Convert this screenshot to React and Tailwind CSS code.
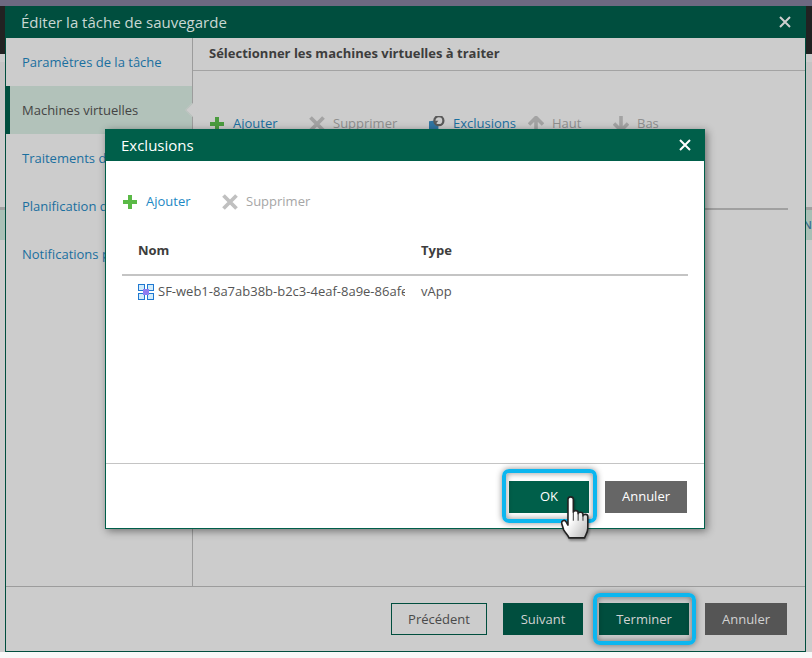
import React from "react";

function Plus({ className }) {
  return (
    <svg width="14" height="14" viewBox="0 0 14 14" className={className}>
      <path d="M5 0h4v5h5v4H9v5H5V9H0V5h5z" fill="currentColor" />
    </svg>
  );
}
function Cross({ className }) {
  return (
    <svg width="16" height="16" viewBox="0 0 16 16" className={className}>
      <path d="M1.500 1.500L14.500 14.500M14.500 1.500L1.500 14.500" stroke="currentColor" strokeWidth="3.800" fill="none" />
    </svg>
  );
}
function Close({ className }) {
  return (
    <svg width="12" height="12" viewBox="0 0 12 12" className={className}>
      <path d="M1 1L11 11M11 1L1 11" stroke="currentColor" strokeWidth="2" fill="none" />
    </svg>
  );
}
function ArrowUp() {
  return (
    <svg width="16" height="16" viewBox="0 0 16 16" className="text-[#a3a3a3]">
      <path d="M8 16V2M1 8.500L8 1.500L15 8.500" stroke="currentColor" strokeWidth="3.600" fill="none" />
    </svg>
  );
}
function ArrowDown() {
  return (
    <svg width="16" height="16" viewBox="0 0 16 16" className="text-[#a3a3a3]">
      <path d="M8 0V14M1 7.500L8 14.500L15 7.500" stroke="currentColor" strokeWidth="3.600" fill="none" />
    </svg>
  );
}
function ExclIcon() {
  return (
    <svg width="17" height="16" viewBox="0 0 17 16">
      <path d="M0 5L5 4.500L10 10V16H0z" fill="#2f74a1" />
      <circle cx="10.500" cy="4.500" r="4.800" fill="#cccccc" stroke="#5a5a5a" strokeWidth="2.400" />
      <path d="M6.500 8.500L10 4.500H6.500z" fill="#5a5a5a" />
    </svg>
  );
}
function VappIcon() {
  return (
    <svg width="16" height="16" viewBox="0 0 16 16" className="shrink-0">
      <g fill="#d3ecfb" stroke="#1f78d1" strokeWidth="1">
        <rect x="0.500" y="0.500" width="6" height="6" />
        <rect x="9.500" y="0.500" width="6" height="6" />
        <rect x="0.500" y="9.500" width="6" height="6" />
        <rect x="9.500" y="9.500" width="6" height="6" />
      </g>
      <rect x="5" y="5" width="6" height="6" fill="#8f7cf0" />
    </svg>
  );
}
function Hand() {
  return (
    <svg width="30" height="44" viewBox="0 0 28 41">
      <defs>
        <linearGradient id="hg" x1="0" y1="0" x2="1" y2="1">
          <stop offset="0.45" stopColor="#ffffff" />
          <stop offset="1" stopColor="#b5b5b5" />
        </linearGradient>
      </defs>
      <path
        d="M6.500 4c0-3 5-3 5 0v12c0-2 4.500-2 4.500 .5v1c0-2 4.500-2 4.500 .5v1.500c0-2 4.500-2 4.500 .5V31c0 4-2 6-3 9H7.500c-1-3-3-4-5-7.500L.8 27c-1-3 2.500-4.500 4-2l1.700 3z"
        fill="url(#hg)"
        stroke="#222"
        strokeWidth="1.500"
        strokeLinejoin="round"
      />
      <path d="M11.500 16v8M16 17v7M20.500 19v5" stroke="#444" strokeWidth="1" fill="none" />
    </svg>
  );
}

function NavItem({ children, selected }) {
  return (
    <div
      className={
        selected
          ? "relative h-12 flex items-center border-l-4 border-[#004e3e] bg-[#b2c2ba] pl-[12px] pt-[2px] text-[#444444]"
          : "h-12 flex items-center pl-[16px] pt-[2px] text-[#1a6f9f] whitespace-nowrap overflow-hidden"
      }
    >
      {children}
      {selected && (
        <div className="absolute right-[-5px] top-[19px] w-[10px] h-[10px] rotate-45 bg-[#cccccc] border-l border-b border-[#b9c2bd]" />
      )}
    </div>
  );
}

function ToolItem({ icon, label, className, labelClass }) {
  return (
    <div className={"flex items-center " + className}>
      <div className="flex justify-center w-4 shrink-0">{icon}</div>
      <span className={"ml-2 " + labelClass}>{label}</span>
    </div>
  );
}

function Highlight({ children, className, ringClass }) {
  return (
    <div className={"relative " + className}>
      {children}
      <div className={"absolute rounded-[7px] border-4 border-[#0cb6ef] shadow-[0_0_6px_rgba(0,0,0,0.45),inset_0_0_6px_rgba(0,0,0,0.45)] pointer-events-none " + ringClass} />
    </div>
  );
}

export default function App() {
  return (
    <div className="relative h-[658px] w-[812px] overflow-hidden bg-[#f8f8f8] [font-family:'Open_Sans',sans-serif] text-[13px]">
      {/* Page behind the wizard */}
      <div className="h-[652px] flex flex-col bg-[#cccccc]">
        <div className="h-[6px] bg-[#6d6981]" />
        <div className="h-[48px] bg-[#222222]" />
        <div className="h-[8px]" />
        <div className="h-[48px] bg-[#c4c4c4]" />
        <div className="h-[97px]" />
        <div className="h-[33px] border-t-[3px] border-[#a0a0a0] bg-[#a9c0b6] flex justify-end items-center text-[11px] text-[#3b6d8c] font-semibold">
          IN
        </div>
      </div>

      {/* Wizard window */}
      <div className="absolute left-[5px] top-[6px] w-[801px] h-[646px] flex flex-col border-x border-b border-[#004e3e] bg-[#cccccc]">
        <div className="h-[32px] shrink-0 -mx-px flex items-center justify-between bg-[#004e3e] pl-[16px] pr-[15px] text-[15px] text-[#c9d8d3]">
          <span>Éditer la tâche de sauvegarde</span>
          <Close className="text-[#cfcfcf]" />
        </div>
        <div className="flex-1 flex min-h-0">
          <div className="w-[187px] shrink-0 border-r border-[#9c9c9c]">
            <NavItem>Paramètres de la tâche</NavItem>
            <NavItem selected>Machines virtuelles</NavItem>
            <NavItem>Traitements des invités</NavItem>
            <NavItem>Planification de la tâche</NavItem>
            <NavItem>Notifications par e-mail</NavItem>
          </div>
          <div className="flex-1 flex flex-col">
            <div className="h-[33px] shrink-0 flex items-center pl-[16px] pb-px border-b border-[#a3a3a3] font-bold text-[#3d3d3d]">
              Sélectionner les machines virtuelles à traiter
            </div>
            <div className="h-[105px] shrink-0 flex items-center pt-[1px] pl-[16px] text-[13px]">
              <ToolItem icon={<Plus className="text-[#4b9c3f]" />} label="Ajouter" className="w-[100px]" labelClass="text-[#1a6f9f]" />
              <ToolItem icon={<Cross className="text-[#a3a3a3]" />} label="Supprimer" className="w-[120px]" labelClass="text-[#8f8f8f]" />
              <ToolItem icon={<ExclIcon />} label="Exclusions" className="w-[99px]" labelClass="text-[#1a6f9f]" />
              <ToolItem icon={<ArrowUp />} label="Haut" className="w-[85px]" labelClass="text-[#8f8f8f]" />
              <ToolItem icon={<ArrowDown />} label="Bas" className="w-[60px]" labelClass="text-[#8f8f8f]" />
            </div>
            <div className="mt-[32px] mr-[17px] border-t-[2px] border-[#a0a0a0]" />
          </div>
        </div>
        <div className="h-[65px] shrink-0 flex items-center justify-end gap-4 pr-[18px] border-t border-[#9c9c9c]">
          <button className="w-[96px] h-8 pt-[2px] border border-[#004e3e] text-[#4a4a4a]">Précédent</button>
          <button className="w-[80px] h-8 pt-[2px] bg-[#004e3e] text-[#d2d2d2]">Suivant</button>
          <Highlight className="w-[90px] h-8" ringClass="-left-[6px] -right-[7px] -top-[10px] -bottom-[10px]">
            <button className="w-full h-full pt-[2px] bg-[#004e3e] text-[#d2d2d2]">Terminer</button>
          </Highlight>
          <button className="w-[82px] h-8 pt-[2px] bg-[#555555] text-[#d2d2d2]">Annuler</button>
        </div>
      </div>

      {/* Exclusions dialog */}
      <div className="absolute left-[105px] top-[129px] w-[600px] h-[400px] flex flex-col bg-white border border-t-0 border-[#005f4a] shadow-[2px_2px_8px_rgba(0,0,0,0.45)]">
        <div className="h-[32px] shrink-0 -mx-px flex items-center justify-between bg-[#005f4a] pl-[16px] pr-[14px] text-[15px] text-white">
          <span>Exclusions</span>
          <Close className="text-white" />
        </div>
        <div className="flex-1 px-[16px]">
          <div className="h-[40px] mt-[21px] flex items-center">
            <ToolItem icon={<Plus className="text-[#5ab946]" />} label="Ajouter" className="w-[100px]" labelClass="text-[#1c88c4]" />
            <ToolItem icon={<Cross className="text-[#c0c0c0]" />} label="Supprimer" className="w-[120px]" labelClass="text-[#a6a6a6]" />
          </div>
          <div className="h-[54px] flex items-center border-b-2 border-[#c4c4c4] pl-[16px] pt-[6px] font-bold text-[#3d3d3d]">
            <div className="w-[283px]">Nom</div>
            <div>Type</div>
          </div>
          <div className="h-[30px] flex items-center pl-[16px] pt-[2px] text-[#555555]">
            <div className="w-[283px] flex items-center">
              <VappIcon />
              <span className="ml-1 w-[247px] overflow-hidden whitespace-nowrap">SF-web1-8a7ab38b-b2c3-4eaf-8a9e-86afe1c4d2f0</span>
            </div>
            <div>vApp</div>
          </div>
        </div>
        <div className="h-[65px] shrink-0 flex items-center justify-end gap-4 pt-[1px] pr-[17px] border-t border-[#c4c4c4]">
          <Highlight className="w-[80px] h-8" ringClass="-left-[7px] -right-[8px] -top-[12px] -bottom-[10px]">
            <button className="w-full h-full bg-[#005f4a] text-white">OK</button>
          </Highlight>
          <button className="w-[82px] h-8 bg-[#666666] text-white">Annuler</button>
        </div>
      </div>

      {/* Pointer in the capture */}
      <div className="absolute left-[561px] top-[495px] drop-shadow-[1px_2px_1px_rgba(0,0,0,0.35)]">
        <Hand />
      </div>
    </div>
  );
}
